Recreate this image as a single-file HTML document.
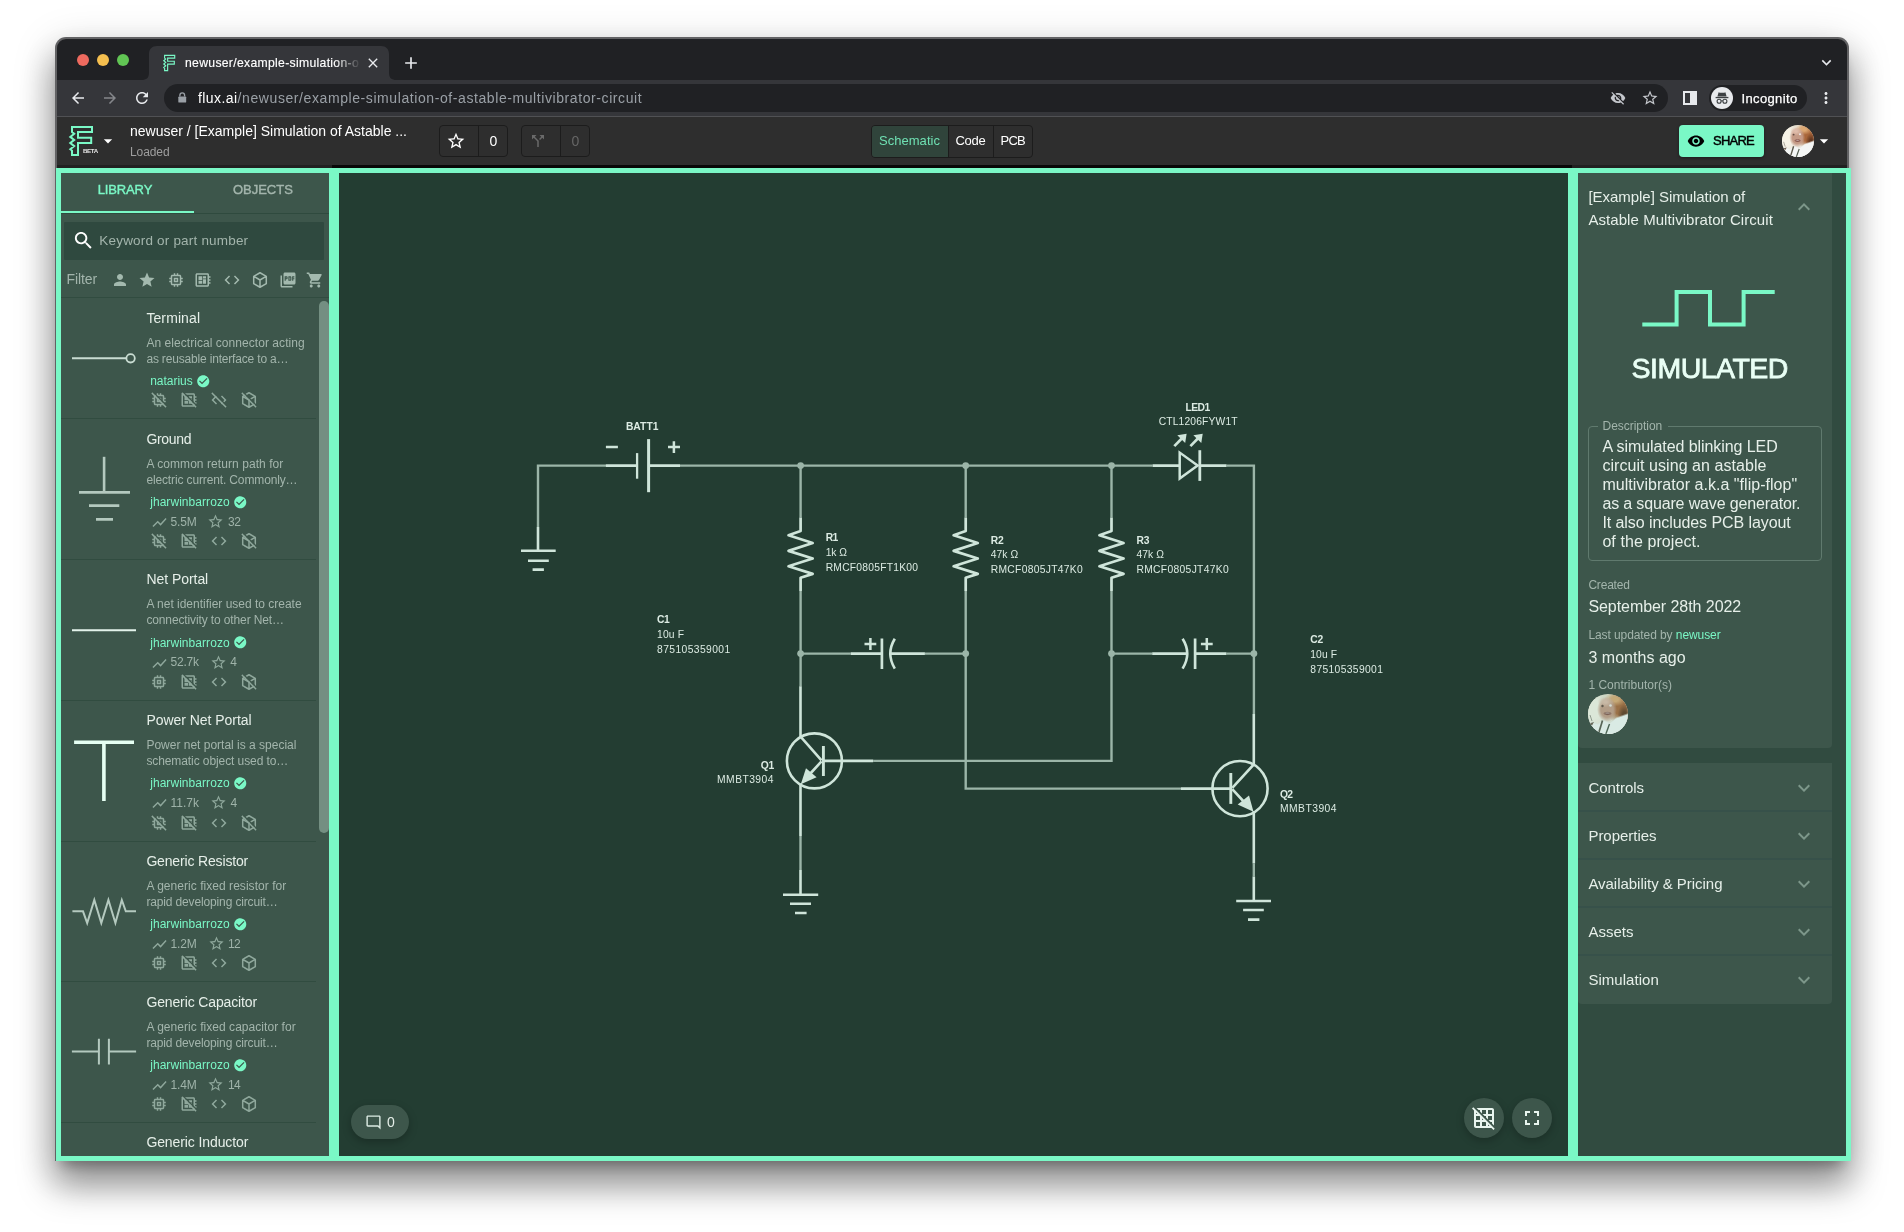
<!DOCTYPE html>
<html lang="en">
<head>
<meta charset="utf-8">
<title>newuser/example-simulation-of-astable-multivibrator-circuit</title>
<style>
*{box-sizing:border-box;margin:0;padding:0}
html,body{width:1904px;height:1232px;overflow:hidden;background:#fff}
body{position:relative;font-family:"Liberation Sans",sans-serif;color:#e6efe9;-webkit-font-smoothing:antialiased}
.a{position:absolute}
.t{position:absolute;white-space:nowrap;line-height:20px;height:20px}
svg{position:absolute;overflow:visible}
/* window */
#root{left:0;top:0;width:1904px;height:1232px;will-change:transform}
#shadow{left:56px;top:38px;width:1792px;height:1122px;border-radius:10px 10px 0 0;
  box-shadow:0 23.500px 35.400px 1.800px rgba(0,0,0,.38),0 10.100px 12.900px -6.550px rgba(0,0,0,.31),0 10px 40.800px 5px rgba(0,0,0,.15)}
#win{left:55px;top:37px;width:1794px;height:1124px;border-radius:11px 11px 0 0;background:#626264;overflow:hidden}
#tabbar{left:2px;top:2px;width:1790px;height:41px;background:#202124;border-radius:9px 9px 0 0}
#toolbar{left:2px;top:43px;width:1790px;height:36px;background:#35363a}
#tbline{left:2px;top:79px;width:1790px;height:1px;background:#505154}
#apphdr{left:2px;top:80px;width:1790px;height:48px;background:#2e2e2e}
#strip{left:2px;top:128px;width:1790px;height:3px;background:#212121}
#stripb{left:277px;top:128px;width:1240px;height:3px;background:#080808}
#below{left:2px;top:131px;width:1790px;height:993px;background:#233d32}
/* panes */
.pane{position:absolute;border:5px solid #7af8c6;top:168px;height:993px;overflow:hidden}
#lp{left:56px;width:278px;background:#3d564b}
#cv{left:334px;width:1239px;background:#233d32}
#rp{left:1573px;width:278px;background:#314b40}
</style>
</head>
<body>
<div id="root" class="a">
<div id="shadow" class="a"></div>
<div id="win" class="a">
  <div id="tabbar" class="a"></div>
  <div id="toolbar" class="a"></div>
  <div id="tbline" class="a"></div>
  <div id="apphdr" class="a"></div>
  <div id="strip" class="a"></div>
  <div id="stripb" class="a"></div>
  <div id="below" class="a"></div>
</div>

<!-- ===== Chrome browser frame ===== -->
<div class="a" style="left:77px;top:53.500px;width:12px;height:12px;border-radius:50%;background:#ee6a5f"></div>
<div class="a" style="left:97px;top:53.500px;width:12px;height:12px;border-radius:50%;background:#f5bf4f"></div>
<div class="a" style="left:117px;top:53.500px;width:12px;height:12px;border-radius:50%;background:#61c554"></div>
<!-- active tab -->
<svg style="left:141px;top:46px" width="256" height="34" viewBox="0 0 256 34"><path d="M0 34 C6 34 8 32 8 26 V8 C8 3 11 0 16 0 H240 C245 0 248 3 248 8 V26 C248 32 250 34 256 34 Z" fill="#35363a"/></svg>
<svg style="left:0;top:0" width="200" height="80"><path d="M164.61 55.34 L174.71 55.34 L174.71 58.07 L167.64 58.07 L167.64 61.23 L174.30 61.23 L174.30 64.06 L167.64 64.06 L167.64 70.66 L164.61 70.66 L164.61 68.21 L163.75 67.44 L165.72 65.75 L163.75 64.06 L165.72 62.38 L163.75 60.74 L165.72 59.05 L164.61 58.07 Z" fill="none" stroke="#7af8c6" stroke-width="1.150" stroke-linejoin="miter"/></svg>
<div class="t" style="letter-spacing:0.311px;left:185px;top:53px;font-size:12.200px;color:#fff;-webkit-text-stroke:.150px #fff;width:176px;overflow:hidden;-webkit-mask-image:linear-gradient(90deg,#000 150px,transparent 176px);mask-image:linear-gradient(90deg,#000 150px,transparent 176px)">newuser/example-simulation-o</div>
<svg style="left:365px;top:55px" width="16" height="16" viewBox="0 0 24 24"><path d="M19 6.410L17.590 5 12 10.590 6.410 5 5 6.410 10.590 12 5 17.590 6.410 19 12 13.410 17.590 19 19 17.590 13.410 12z" fill="#e8eaed"/></svg>
<svg style="left:401px;top:53px" width="20" height="20" viewBox="0 0 24 24"><path d="M19 13h-6v6h-2v-6H5v-2h6V5h2v6h6v2z" fill="#e8eaed"/></svg>
<svg style="left:1816.500px;top:53.100px" width="19" height="19" viewBox="0 0 24 24"><path d="M16.590 8.590L12 13.170 7.410 8.590 6 10l6 6 6-6z" fill="#e8eaed"/></svg>
<!-- toolbar -->
<svg style="left:69px;top:89px" width="18" height="18" viewBox="0 0 24 24"><path d="M20 11H7.830l5.590-5.590L12 4l-8 8 8 8 1.410-1.410L7.830 13H20v-2z" fill="#e8eaed"/></svg>
<svg style="left:101px;top:89px" width="18" height="18" viewBox="0 0 24 24"><path d="M12 4l-1.410 1.410L16.170 11H4v2h12.170l-5.580 5.590L12 20l8-8z" fill="#85878b"/></svg>
<svg style="left:133px;top:89px" width="18" height="18" viewBox="0 0 24 24"><path d="M17.650 6.350C16.200 4.900 14.210 4 12 4c-4.420 0-7.990 3.580-7.990 8s3.570 8 7.990 8c3.730 0 6.840-2.550 7.730-6h-2.080c-.82 2.330-3.040 4-5.650 4-3.310 0-6-2.690-6-6s2.690-6 6-6c1.660 0 3.140.69 4.220 1.780L13 11h7V4l-2.350 2.350z" fill="#e8eaed"/></svg>
<div class="a" style="left:164px;top:84px;width:1504px;height:28px;border-radius:14px;background:#202124"></div>
<svg style="left:176.800px;top:92.200px" width="10.500" height="11.400" viewBox="0 0 12 13"><path d="M3.300 5 V3.600 A2.700 2.700 0 0 1 8.700 3.600 V5" fill="none" stroke="#9aa0a6" stroke-width="1.500"/><rect x="1.500" y="5" width="9" height="7" rx="1" fill="#9aa0a6"/></svg>
<div class="t" style="left:198px;top:88px;font-size:14px"><span style="letter-spacing:0.432px;color:#fff">flux.ai</span><span style="letter-spacing:0.584px;color:#9aa0a6">/newuser/example-simulation-of-astable-multivibrator-circuit</span></div>
<svg style="left:1610px;top:90px" width="16" height="16" viewBox="0 0 24 24"><path d="M12 7c2.760 0 5 2.240 5 5 0 .65-.13 1.260-.36 1.830l2.920 2.920c1.510-1.260 2.700-2.890 3.430-4.750-1.730-4.390-6-7.500-11-7.500-1.400 0-2.740.25-3.980.7l2.160 2.160C10.740 7.130 11.350 7 12 7zM2 4.270l2.280 2.280.46.460C3.080 8.300 1.780 10.020 1 12c1.730 4.390 6 7.500 11 7.500 1.550 0 3.030-.3 4.380-.84l.42.42L19.730 22 21 20.730 3.270 3 2 4.270zM7.530 9.800l1.550 1.550c-.05.21-.08.43-.08.65 0 1.660 1.340 3 3 3 .22 0 .44-.03.65-.08l1.550 1.550c-.67.330-1.410.53-2.200.53-2.760 0-5-2.240-5-5 0-.79.2-1.530.53-2.200zm4.310-.78l3.150 3.150.02-.16c0-1.660-1.340-3-3-3l-.17.010z" fill="#c4c7cc"/></svg>
<svg style="left:1641px;top:89px" width="18" height="18" viewBox="0 0 24 24"><path d="M22 9.240l-7.190-.62L12 2 9.190 8.630 2 9.240l5.460 4.730L5.820 21 12 17.270 18.180 21l-1.630-7.030L22 9.240zM12 15.400l-3.760 2.270 1-4.280-3.320-2.880 4.380-.38L12 6.100l1.710 4.040 4.380.38-3.320 2.880 1 4.280L12 15.400z" fill="#c4c7cc"/></svg>
<svg style="left:1683px;top:91px" width="14" height="14" viewBox="0 0 14 14"><rect x="1" y="1" width="12" height="12" fill="none" stroke="#e8eaed" stroke-width="2"/><rect x="7" y="1" width="6" height="12" fill="#e8eaed"/></svg>
<div class="a" style="left:1709px;top:85px;width:98px;height:26px;border-radius:13px;background:#202124"></div>
<div class="a" style="left:1711px;top:87px;width:22px;height:22px;border-radius:50%;background:#e8eaed"></div>
<svg style="left:1714px;top:90px" width="16" height="16" viewBox="0 0 16 16"><path d="M4.600 2.200 L5.800 2.800 H10.200 L11.400 2.200 L12.600 6.400 H3.400 Z" fill="#3c4043"/><rect x="1.600" y="6.900" width="12.800" height="1.300" fill="#3c4043"/><circle cx="5.100" cy="11.300" r="2" fill="none" stroke="#3c4043" stroke-width="1.100"/><circle cx="10.900" cy="11.300" r="2" fill="none" stroke="#3c4043" stroke-width="1.100"/><path d="M7.100 11 Q8 10.400 8.900 11" fill="none" stroke="#3c4043" stroke-width="1"/></svg>
<div class="t" style="letter-spacing:0.359px;left:1741.500px;top:88.500px;font-size:13px;color:#fff;-webkit-text-stroke:.250px #fff">Incognito</div>
<svg style="left:1817px;top:89px" width="18" height="18" viewBox="0 0 24 24"><path d="M12 8c1.100 0 2-.9 2-2s-.9-2-2-2-2 .9-2 2 .9 2 2 2zm0 2c-1.100 0-2 .9-2 2s.9 2 2 2 2-.9 2-2-.9-2-2-2zm0 6c-1.100 0-2 .9-2 2s.9 2 2 2 2-.9 2-2-.9-2-2-2z" fill="#e8eaed"/></svg>


<!-- ===== Flux app header ===== -->
<svg style="left:0;top:0" width="200" height="170"><path d="M72.0 127.0 L92.0 127.0 L92.0 132.0 L78.0 132.0 L78.0 137.8 L91.2 137.8 L91.2 143.0 L78.0 143.0 L78.0 155.1 L72.0 155.1 L72.0 150.6 L70.3 149.2 L74.2 146.1 L70.3 143.0 L74.2 139.9 L70.3 136.9 L74.2 133.8 L72.0 132.0 Z" fill="none" stroke="#7af8c6" stroke-width="2" stroke-linejoin="miter"/></svg>
<div class="t" style="letter-spacing:-0.398px;left:83px;top:143.700px;font-size:6.200px;font-weight:bold;color:#e4e4e4;line-height:14px;height:14px">BETA</div>
<svg style="left:98px;top:130.700px" width="20" height="20" viewBox="0 0 24 24"><path d="M7 10l5 5 5-5z" fill="#fff"/></svg>
<div class="t" style="letter-spacing:-0.001px;left:130px;top:121px;font-size:14px;color:#fff">newuser / [Example] Simulation of Astable ...</div>
<div class="t" style="letter-spacing:-0.091px;left:130px;top:141.500px;font-size:12px;color:#9e9e9e">Loaded</div>
<!-- star group -->
<div class="a" style="left:439px;top:125px;width:69px;height:32px;border:1px solid #1c1c1c;border-radius:4px"></div>
<div class="a" style="left:478px;top:126px;width:1px;height:30px;background:#1c1c1c"></div>
<svg style="left:446px;top:131px" width="20" height="20" viewBox="0 0 24 24"><path d="M22 9.240l-7.190-.62L12 2 9.190 8.630 2 9.240l5.460 4.730L5.820 21 12 17.270 18.180 21l-1.630-7.030L22 9.240zM12 15.400l-3.760 2.270 1-4.280-3.320-2.880 4.380-.38L12 6.100l1.710 4.040 4.380.38-3.320 2.880 1 4.280L12 15.400z" fill="#fff"/></svg>
<div class="t" style="left:479px;top:131px;width:29px;text-align:center;font-size:14px;color:#fff">0</div>
<!-- fork group -->
<div class="a" style="left:521px;top:125px;width:69px;height:32px;border:1px solid #1c1c1c;border-radius:4px"></div>
<div class="a" style="left:560px;top:126px;width:1px;height:30px;background:#1c1c1c"></div>
<svg style="left:529px;top:132px" width="18" height="18" viewBox="0 0 24 24"><path d="M14 4l2.290 2.290-2.880 2.880 1.420 1.420 2.880-2.880L20 10V4zm-4 0H4v6l2.290-2.290 4.710 4.700V20h2v-8.410l-5.290-5.300z" fill="#6a6a6a"/></svg>
<div class="t" style="left:561px;top:131px;width:29px;text-align:center;font-size:14px;color:#666">0</div>
<!-- view switch -->
<div class="a" style="left:871px;top:125px;width:162px;height:33px;border:1px solid #1c1c1c;border-radius:4px;background:#2e2e2e"></div>
<div class="a" style="left:872px;top:126px;width:76px;height:31px;border-radius:3px 0 0 3px;background:#30443b"></div>
<div class="a" style="left:948px;top:126px;width:1px;height:31px;background:#1c1c1c"></div>
<div class="a" style="left:993px;top:126px;width:1px;height:31px;background:#1c1c1c"></div>
<div class="t" style="letter-spacing:0.033px;left:879px;top:131px;font-size:13px;color:#6fe0b3">Schematic</div>
<div class="t" style="letter-spacing:-0.270px;left:955.500px;top:131px;font-size:13px;color:#fff">Code</div>
<div class="t" style="letter-spacing:-0.745px;left:1000.500px;top:131px;font-size:13px;color:#fff">PCB</div>
<!-- share -->
<div class="a" style="left:1678.600px;top:125px;width:85.600px;height:32px;border-radius:4px;background:#7af8c6;box-shadow:0 1px 3px rgba(0,0,0,.4)"></div>
<svg style="left:1687px;top:132px" width="18" height="18" viewBox="0 0 24 24"><path d="M12 4.500C7 4.500 2.730 7.610 1 12c1.730 4.390 6 7.500 11 7.500s9.270-3.110 11-7.500c-1.730-4.390-6-7.500-11-7.500zM12 17c-2.760 0-5-2.240-5-5s2.240-5 5-5 5 2.240 5 5-2.240 5-5 5zm0-8c-1.660 0-3 1.340-3 3s1.340 3 3 3 3-1.340 3-3-1.340-3-3-3z" fill="#000"/></svg>
<div class="t" style="letter-spacing:-0.759px;left:1713px;top:131px;font-size:13px;-webkit-text-stroke:.450px #000;color:#000">SHARE</div>
<!-- avatar -->
<svg style="left:1781.6px;top:125px" width="32" height="32" viewBox="0 0 40 40"><defs><clipPath id="av1c"><circle cx="20" cy="20" r="20"/></clipPath><radialGradient id="av1g1"><stop offset="0.5" stop-color="#f6f2e6"/><stop offset="1.0" stop-color="#f6f2e6" stop-opacity="0"/></radialGradient><radialGradient id="av1g2"><stop offset="0.45" stop-color="#a9663a"/><stop offset="1.0" stop-color="#a9663a" stop-opacity="0"/></radialGradient><radialGradient id="av1g3"><stop offset="0.3" stop-color="#643820"/><stop offset="1.0" stop-color="#643820" stop-opacity="0"/></radialGradient><radialGradient id="av1g4"><stop offset="0.3" stop-color="#dca873"/><stop offset="1.0" stop-color="#dca873" stop-opacity="0"/></radialGradient><radialGradient id="av1g5"><stop offset="0.62" stop-color="#c59a86"/><stop offset="1.0" stop-color="#c59a86" stop-opacity="0"/></radialGradient><radialGradient id="av1g6"><stop offset="0.2" stop-color="#dfbcab"/><stop offset="1.0" stop-color="#dfbcab" stop-opacity="0"/></radialGradient><radialGradient id="av1g7"><stop offset="0.4" stop-color="#7d4a44"/><stop offset="1.0" stop-color="#7d4a44" stop-opacity="0"/></radialGradient><linearGradient id="av1l" x1="0" y1="0" x2="0" y2="1"><stop offset="0" stop-color="#e4dccb"/><stop offset="1" stop-color="#efeee8"/></linearGradient></defs><g clip-path="url(#av1c)"><rect x="-4" y="-4" width="48" height="48" fill="url(#av1l)"/><ellipse cx="6" cy="15" rx="13" ry="19" fill="url(#av1g1)"/><ellipse cx="32" cy="13" rx="14" ry="17" fill="url(#av1g2)"/><ellipse cx="36.500" cy="21" rx="7" ry="11" fill="url(#av1g3)"/><ellipse cx="27" cy="5.500" rx="11" ry="7" fill="url(#av1g4)"/><ellipse cx="19" cy="15.500" rx="10" ry="12.500" fill="url(#av1g5)"/><ellipse cx="17.500" cy="8" rx="8" ry="5.500" fill="url(#av1g6)"/><ellipse cx="19.500" cy="19.500" rx="4.600" ry="2.200" fill="url(#av1g7)"/><ellipse cx="19.500" cy="19" rx="2.400" ry=".600" fill="#e9d9d2" opacity=".8"/><circle cx="14.500" cy="12" r="1.200" fill="#4a342e" opacity=".8"/><circle cx="22.500" cy="11.500" r="1.300" fill="#f3f3f3" opacity=".85"/><path d="M-2 42 L-2 30.500 L4 27.500 L10 29.500 L15 25.500 L22 28.500 L28 23.500 L42 18.500 L42 42 Z" fill="#e9ebe8" opacity=".55"/><path d="M-2 42 L-2 31.500 L4 28.500 L10 30.500 L15 26.500 L22 29.500 L28 24.500 L42 19.500 L42 42 Z" fill="#f4f6f5"/><path d="M1 29.500 L6 28 L4 31.500 Z" fill="#4a3626" opacity=".8"/><path d="M14.500 26.500 L11 38" stroke="#3d3a2b" stroke-width="1.700" stroke-opacity=".85" fill="none"/><path d="M21.500 30 L17.500 41" stroke="#2f3b2c" stroke-width="1.400" stroke-opacity=".85" fill="none"/><path d="M2 21 L4 27" stroke="#55504a" stroke-width=".800" stroke-opacity=".7" fill="none"/></g></svg>
<svg style="left:1814px;top:130.900px" width="20" height="20" viewBox="0 0 24 24"><path d="M7 10l5 5 5-5z" fill="#fff"/></svg>


<div id="lp" class="pane">
<!--LEFT-->
<div class="a" style="left:0;top:40px;width:268px;height:1px;background:#2f4a3e"></div>
<div class="a" style="left:0;top:38px;width:133px;height:2px;background:#7af8c6"></div>
<div class="t" style="letter-spacing:-0.129px;left:36.7px;top:6.9px;font-size:13px;color:#7af8c6;-webkit-text-stroke:.400px #7af8c6">LIBRARY</div>
<div class="t" style="letter-spacing:-0.024px;left:172.0px;top:6.9px;font-size:13px;color:#a3b5ac;-webkit-text-stroke:.400px #a3b5ac">OBJECTS</div>
<div class="a" style="left:3px;top:49px;width:260px;height:38px;border-radius:1px;background:#2f493f"></div>
<svg style="left:10.7px;top:56.3px" width="23" height="23" viewBox="0 0 24 24"><path d="M15.500 14h-.790l-.280-.270C15.410 12.590 16 11.110 16 9.500 16 5.910 13.090 3 9.500 3S3 5.910 3 9.500 5.910 16 9.500 16c1.610 0 3.090-.590 4.230-1.570l.270.280v.790l5 4.990L20.490 19l-4.990-5zm-6 0C7.010 14 5 11.990 5 9.500S7.010 5 9.500 5 14 7.010 14 9.500 11.990 14 9.500 14z" fill="#fff"/></svg>
<div class="t" style="letter-spacing:0.190px;left:38.3px;top:57.5px;font-size:13.5px;color:#a3b5ac;">Keyword or part number</div>
<div class="t" style="letter-spacing:-0.054px;left:5.4px;top:96.4px;font-size:14px;color:#a3b5ac;">Filter</div>
<svg style="left:49.5px;top:98.0px" width="18" height="18" viewBox="0 0 24 24"><path d="M12 12c2.210 0 4-1.790 4-4s-1.790-4-4-4-4 1.790-4 4 1.790 4 4 4zm0 2c-2.670 0-8 1.340-8 4v2h16v-2c0-2.660-5.330-4-8-4z" fill="#a3b9ae"/></svg>
<svg style="left:77.4px;top:98.0px" width="18" height="18" viewBox="0 0 24 24"><path d="M12 17.270L18.180 21l-1.640-7.030L22 9.240l-7.190-.610L12 2 9.190 8.630 2 9.240l5.460 4.730L5.820 21z" fill="#a3b9ae"/></svg>
<svg style="left:105.6px;top:98.0px" width="18" height="18" viewBox="0 0 24 24"><path d="M15 9H9v6h6V9zm-2 4h-2v-2h2v2zm8-2V9h-2V7c0-1.100-.9-2-2-2h-2V3h-2v2h-2V3H9v2H7c-1.100 0-2 .9-2 2v2H3v2h2v2H3v2h2v2c0 1.100.9 2 2 2h2v2h2v-2h2v2h2v-2h2c1.100 0 2-.9 2-2v-2h2v-2h-2v-2h2zm-4 6H7V7h10v10z" fill="#a3b9ae"/></svg>
<svg style="left:133.4px;top:98.0px" width="18" height="18" viewBox="0 0 24 24"><path d="M22 9V7h-2V5c0-1.100-.9-2-2-2H4c-1.100 0-2 .9-2 2v14c0 1.100.9 2 2 2h14c1.100 0 2-.9 2-2v-2h2v-2h-2v-2h2v-2h-2V9h2zm-4 10H4V5h14v14zM6 13h5v4H6zm6-6h4v3h-4zM6 7h5v5H6zm6 4h4v6h-4z" fill="#a3b9ae"/></svg>
<svg style="left:161.6px;top:98.0px" width="18" height="18" viewBox="0 0 24 24"><path d="M9.400 16.600L4.800 12l4.600-4.600L8 6l-6 6 6 6 1.400-1.400zm5.200 0l4.600-4.600-4.600-4.600L16 6l6 6-6 6-1.400-1.400z" fill="#a3b9ae"/></svg>
<svg style="left:189.6px;top:98.0px" width="18" height="18" viewBox="0 0 24 24"><path d="M12 2.300 L20.400 7.100 V16.900 L12 21.700 L3.600 16.900 V7.100 Z M3.900 7.300 L12 12 L20.100 7.300 M12 12 V21.400" fill="none" stroke="#a3b9ae" stroke-width="2" stroke-linejoin="round"/></svg>
<svg style="left:217.6px;top:98.0px" width="18" height="18" viewBox="0 0 24 24"><path d="M20 2H8c-1.100 0-2 .9-2 2v12c0 1.100.9 2 2 2h12c1.100 0 2-.9 2-2V4c0-1.100-.9-2-2-2zm-8.500 7.500c0 .830-.670 1.500-1.500 1.500H9v2H7.500V7H10c.830 0 1.500.670 1.500 1.500v1zm5 2c0 .830-.670 1.500-1.500 1.500h-2.500V7H15c.830 0 1.500.670 1.500 1.500v3zm4-3H19v1h1.500V11H19v2h-1.500V7h3v1.500zM9 9.500h1v-1H9v1zM4 6H2v14c0 1.100.9 2 2 2h14v-2H4V6zm10 5.500h1v-3h-1v3z" fill="#a3b9ae"/></svg>
<svg style="left:244.9px;top:98.0px" width="18" height="18" viewBox="0 0 24 24"><path d="M7 18c-1.100 0-1.990.9-1.990 2S5.900 22 7 22s2-.9 2-2-.9-2-2-2zM1 2v2h2l3.600 7.590-1.350 2.450c-.160.280-.250.610-.250.960 0 1.100.9 2 2 2h12v-2H7.420c-.140 0-.250-.110-.250-.250l.030-.120.9-1.630h7.450c.750 0 1.410-.410 1.750-1.030l3.580-6.490c.080-.140.120-.310.120-.480 0-.550-.450-1-1-1H5.210l-.940-2H1zm16 16c-1.100 0-1.990.9-1.990 2s.890 2 1.990 2 2-.9 2-2-.9-2-2-2z" fill="#a3b9ae"/></svg>
<div class="a" style="left:0;top:124.250px;width:268px;height:1px;background:#314c40"></div>
<div class="a" style="left:257.800px;top:127.800px;width:9.800px;height:532.400px;border-radius:4.900px;background:#748f82"></div>
<!-- Terminal -->
<div class="t" style="letter-spacing:0.099px;left:85.4px;top:134.5px;font-size:14px;color:#e6efe9;">Terminal</div>
<div class="t" style="letter-spacing:0.052px;left:85.4px;top:159.6px;font-size:12px;color:#a3b5ac;">An electrical connector acting</div>
<div class="t" style="letter-spacing:-0.176px;left:85.4px;top:175.6px;font-size:12px;color:#a3b5ac;">as reusable interface to a…</div>
<div class="t" style="letter-spacing:-0.025px;left:89.2px;top:197.9px;font-size:12px;color:#7af8c6;">natarius</div>
<svg style="left:135.2px;top:200.6px" width="14.5" height="14.5" viewBox="0 0 24 24"><path d="M12 2C6.480 2 2 6.480 2 12s4.480 10 10 10 10-4.480 10-10S17.520 2 12 2zm-2 15l-5-5 1.410-1.410L10 14.170l7.590-7.590L19 8l-9 9z" fill="#7af8c6"/></svg>
<svg style="left:89.0px;top:218.3px" width="18" height="18" viewBox="0 0 24 24"><path d="M15 9H9v6h6V9zm-2 4h-2v-2h2v2zm8-2V9h-2V7c0-1.100-.9-2-2-2h-2V3h-2v2h-2V3H9v2H7c-1.100 0-2 .9-2 2v2H3v2h2v2H3v2h2v2c0 1.100.9 2 2 2h2v2h2v-2h2v2h2v-2h2c1.100 0 2-.9 2-2v-2h2v-2h-2v-2h2zm-4 6H7V7h10v10z" fill="#8fa89c"/><path d="M2.500 2.500 L21.500 21.500" stroke="#8fa89c" stroke-width="2" fill="none"/><path d="M4 1.200 L22.800 20" stroke="#3d564b" stroke-width="1.600" fill="none"/></svg>
<svg style="left:118.8px;top:218.3px" width="18" height="18" viewBox="0 0 24 24"><path d="M22 9V7h-2V5c0-1.100-.9-2-2-2H4c-1.100 0-2 .9-2 2v14c0 1.100.9 2 2 2h14c1.100 0 2-.9 2-2v-2h2v-2h-2v-2h2v-2h-2V9h2zm-4 10H4V5h14v14zM6 13h5v4H6zm6-6h4v3h-4zM6 7h5v5H6zm6 4h4v6h-4z" fill="#8fa89c"/><path d="M2.500 2.500 L21.500 21.500" stroke="#8fa89c" stroke-width="2" fill="none"/><path d="M4 1.200 L22.800 20" stroke="#3d564b" stroke-width="1.600" fill="none"/></svg>
<svg style="left:148.8px;top:218.3px" width="18" height="18" viewBox="0 0 24 24"><path d="M9.400 16.600L4.800 12l4.600-4.600L8 6l-6 6 6 6 1.400-1.400zm5.200 0l4.600-4.600-4.600-4.600L16 6l6 6-6 6-1.400-1.400z" fill="#8fa89c"/><path d="M2.500 2.500 L21.500 21.500" stroke="#8fa89c" stroke-width="2" fill="none"/><path d="M4 1.200 L22.800 20" stroke="#3d564b" stroke-width="1.600" fill="none"/></svg>
<svg style="left:179.1px;top:218.3px" width="18" height="18" viewBox="0 0 24 24"><path d="M12 2.300 L20.400 7.100 V16.900 L12 21.700 L3.600 16.900 V7.100 Z M3.900 7.300 L12 12 L20.100 7.300 M12 12 V21.400" fill="none" stroke="#8fa89c" stroke-width="2" stroke-linejoin="round"/><path d="M2.500 2.500 L21.500 21.500" stroke="#8fa89c" stroke-width="2" fill="none"/><path d="M4 1.200 L22.800 20" stroke="#3d564b" stroke-width="1.600" fill="none"/></svg>
<div class="a" style="left:0;top:245.25px;width:255px;height:1px;background:#314c40"></div>
<!-- Ground -->
<div class="t" style="letter-spacing:-0.317px;left:85.4px;top:255.5px;font-size:14px;color:#e6efe9;">Ground</div>
<div class="t" style="letter-spacing:0.066px;left:85.4px;top:280.6px;font-size:12px;color:#a3b5ac;">A common return path for</div>
<div class="t" style="letter-spacing:-0.134px;left:85.4px;top:296.6px;font-size:12px;color:#a3b5ac;">electric current. Commonly…</div>
<div class="t" style="letter-spacing:0.057px;left:89.2px;top:318.9px;font-size:12px;color:#7af8c6;">jharwinbarrozo</div>
<svg style="left:172.2px;top:321.6px" width="14.5" height="14.5" viewBox="0 0 24 24"><path d="M12 2C6.480 2 2 6.480 2 12s4.480 10 10 10 10-4.480 10-10S17.520 2 12 2zm-2 15l-5-5 1.410-1.410L10 14.170l7.590-7.590L19 8l-9 9z" fill="#7af8c6"/></svg>
<svg style="left:89.5px;top:340.7px" width="17" height="17" viewBox="0 0 24 24"><path d="M3.500 18.490l6-6.010 4 4L22 6.920l-1.410-1.410-7.090 7.970-4-4L2 16.990z" fill="#8fa89c"/></svg>
<div class="t" style="letter-spacing:-0.147px;left:109.5px;top:338.6px;font-size:12px;color:#9fb3a9;">5.5M</div>
<svg style="left:146.4px;top:339.7px" width="17" height="17" viewBox="0 0 24 24"><path d="M22 9.240l-7.190-.620L12 2 9.190 8.630 2 9.240l5.460 4.730L5.820 21 12 17.270 18.180 21l-1.630-7.030L22 9.240zM12 15.400l-3.760 2.270 1-4.280-3.320-2.880 4.380-.380L12 6.100l1.710 4.040 4.380.380-3.320 2.880 1 4.280L12 15.400z" fill="#8fa89c"/></svg>
<div class="t" style="letter-spacing:-0.430px;left:167.0px;top:338.6px;font-size:12px;color:#9fb3a9;">32</div>
<svg style="left:89.0px;top:359.0px" width="18" height="18" viewBox="0 0 24 24"><path d="M15 9H9v6h6V9zm-2 4h-2v-2h2v2zm8-2V9h-2V7c0-1.100-.9-2-2-2h-2V3h-2v2h-2V3H9v2H7c-1.100 0-2 .9-2 2v2H3v2h2v2H3v2h2v2c0 1.100.9 2 2 2h2v2h2v-2h2v2h2v-2h2c1.100 0 2-.9 2-2v-2h2v-2h-2v-2h2zm-4 6H7V7h10v10z" fill="#8fa89c"/><path d="M2.500 2.500 L21.500 21.500" stroke="#8fa89c" stroke-width="2" fill="none"/><path d="M4 1.200 L22.800 20" stroke="#3d564b" stroke-width="1.600" fill="none"/></svg>
<svg style="left:118.8px;top:359.0px" width="18" height="18" viewBox="0 0 24 24"><path d="M22 9V7h-2V5c0-1.100-.9-2-2-2H4c-1.100 0-2 .9-2 2v14c0 1.100.9 2 2 2h14c1.100 0 2-.9 2-2v-2h2v-2h-2v-2h2v-2h-2V9h2zm-4 10H4V5h14v14zM6 13h5v4H6zm6-6h4v3h-4zM6 7h5v5H6zm6 4h4v6h-4z" fill="#8fa89c"/><path d="M2.500 2.500 L21.500 21.500" stroke="#8fa89c" stroke-width="2" fill="none"/><path d="M4 1.200 L22.800 20" stroke="#3d564b" stroke-width="1.600" fill="none"/></svg>
<svg style="left:148.8px;top:359.0px" width="18" height="18" viewBox="0 0 24 24"><path d="M9.400 16.600L4.800 12l4.600-4.600L8 6l-6 6 6 6 1.400-1.400zm5.200 0l4.600-4.600-4.600-4.600L16 6l6 6-6 6-1.400-1.400z" fill="#8fa89c"/></svg>
<svg style="left:179.1px;top:359.0px" width="18" height="18" viewBox="0 0 24 24"><path d="M12 2.300 L20.400 7.100 V16.900 L12 21.700 L3.600 16.900 V7.100 Z M3.900 7.300 L12 12 L20.100 7.300 M12 12 V21.400" fill="none" stroke="#8fa89c" stroke-width="2" stroke-linejoin="round"/><path d="M2.500 2.500 L21.500 21.500" stroke="#8fa89c" stroke-width="2" fill="none"/><path d="M4 1.200 L22.800 20" stroke="#3d564b" stroke-width="1.600" fill="none"/></svg>
<div class="a" style="left:0;top:386.00px;width:255px;height:1px;background:#314c40"></div>
<!-- Net Portal -->
<div class="t" style="letter-spacing:-0.045px;left:85.4px;top:396.2px;font-size:14px;color:#e6efe9;">Net Portal</div>
<div class="t" style="letter-spacing:-0.008px;left:85.4px;top:421.4px;font-size:12px;color:#a3b5ac;">A net identifier used to create</div>
<div class="t" style="letter-spacing:-0.124px;left:85.4px;top:437.4px;font-size:12px;color:#a3b5ac;">connectivity to other Net…</div>
<div class="t" style="letter-spacing:0.057px;left:89.2px;top:459.6px;font-size:12px;color:#7af8c6;">jharwinbarrozo</div>
<svg style="left:172.2px;top:462.4px" width="14.5" height="14.5" viewBox="0 0 24 24"><path d="M12 2C6.480 2 2 6.480 2 12s4.480 10 10 10 10-4.480 10-10S17.520 2 12 2zm-2 15l-5-5 1.410-1.410L10 14.170l7.590-7.590L19 8l-9 9z" fill="#7af8c6"/></svg>
<svg style="left:89.5px;top:481.5px" width="17" height="17" viewBox="0 0 24 24"><path d="M3.500 18.490l6-6.010 4 4L22 6.920l-1.410-1.410-7.090 7.970-4-4L2 16.990z" fill="#8fa89c"/></svg>
<div class="t" style="letter-spacing:-0.192px;left:109.5px;top:479.4px;font-size:12px;color:#9fb3a9;">52.7k</div>
<svg style="left:148.7px;top:480.5px" width="17" height="17" viewBox="0 0 24 24"><path d="M22 9.240l-7.190-.620L12 2 9.190 8.630 2 9.240l5.460 4.730L5.820 21 12 17.270 18.180 21l-1.630-7.030L22 9.240zM12 15.400l-3.760 2.270 1-4.280-3.320-2.880 4.380-.380L12 6.100l1.710 4.040 4.380.380-3.320 2.880 1 4.280L12 15.400z" fill="#8fa89c"/></svg>
<div class="t" style="letter-spacing:-0.688px;left:169.3px;top:479.4px;font-size:12px;color:#9fb3a9;">4</div>
<svg style="left:89.0px;top:499.8px" width="18" height="18" viewBox="0 0 24 24"><path d="M15 9H9v6h6V9zm-2 4h-2v-2h2v2zm8-2V9h-2V7c0-1.100-.9-2-2-2h-2V3h-2v2h-2V3H9v2H7c-1.100 0-2 .9-2 2v2H3v2h2v2H3v2h2v2c0 1.100.9 2 2 2h2v2h2v-2h2v2h2v-2h2c1.100 0 2-.9 2-2v-2h2v-2h-2v-2h2zm-4 6H7V7h10v10z" fill="#8fa89c"/></svg>
<svg style="left:118.8px;top:499.8px" width="18" height="18" viewBox="0 0 24 24"><path d="M22 9V7h-2V5c0-1.100-.9-2-2-2H4c-1.100 0-2 .9-2 2v14c0 1.100.9 2 2 2h14c1.100 0 2-.9 2-2v-2h2v-2h-2v-2h2v-2h-2V9h2zm-4 10H4V5h14v14zM6 13h5v4H6zm6-6h4v3h-4zM6 7h5v5H6zm6 4h4v6h-4z" fill="#8fa89c"/><path d="M2.500 2.500 L21.500 21.500" stroke="#8fa89c" stroke-width="2" fill="none"/><path d="M4 1.200 L22.800 20" stroke="#3d564b" stroke-width="1.600" fill="none"/></svg>
<svg style="left:148.8px;top:499.8px" width="18" height="18" viewBox="0 0 24 24"><path d="M9.400 16.600L4.800 12l4.600-4.600L8 6l-6 6 6 6 1.400-1.400zm5.200 0l4.600-4.600-4.600-4.600L16 6l6 6-6 6-1.400-1.400z" fill="#8fa89c"/></svg>
<svg style="left:179.1px;top:499.8px" width="18" height="18" viewBox="0 0 24 24"><path d="M12 2.300 L20.400 7.100 V16.900 L12 21.700 L3.600 16.900 V7.100 Z M3.900 7.300 L12 12 L20.100 7.300 M12 12 V21.400" fill="none" stroke="#8fa89c" stroke-width="2" stroke-linejoin="round"/><path d="M2.500 2.500 L21.500 21.500" stroke="#8fa89c" stroke-width="2" fill="none"/><path d="M4 1.200 L22.800 20" stroke="#3d564b" stroke-width="1.600" fill="none"/></svg>
<div class="a" style="left:0;top:526.75px;width:255px;height:1px;background:#314c40"></div>
<!-- Power Net Portal -->
<div class="t" style="letter-spacing:-0.033px;left:85.4px;top:537.0px;font-size:14px;color:#e6efe9;">Power Net Portal</div>
<div class="t" style="letter-spacing:-0.003px;left:85.4px;top:562.1px;font-size:12px;color:#a3b5ac;">Power net portal is a special</div>
<div class="t" style="letter-spacing:-0.091px;left:85.4px;top:578.1px;font-size:12px;color:#a3b5ac;">schematic object used to…</div>
<div class="t" style="letter-spacing:0.057px;left:89.2px;top:600.4px;font-size:12px;color:#7af8c6;">jharwinbarrozo</div>
<svg style="left:172.2px;top:603.1px" width="14.5" height="14.5" viewBox="0 0 24 24"><path d="M12 2C6.480 2 2 6.480 2 12s4.480 10 10 10 10-4.480 10-10S17.520 2 12 2zm-2 15l-5-5 1.410-1.410L10 14.170l7.590-7.590L19 8l-9 9z" fill="#7af8c6"/></svg>
<svg style="left:89.5px;top:622.2px" width="17" height="17" viewBox="0 0 24 24"><path d="M3.500 18.490l6-6.010 4 4L22 6.920l-1.410-1.410-7.090 7.970-4-4L2 16.990z" fill="#8fa89c"/></svg>
<div class="t" style="letter-spacing:0.006px;left:109.5px;top:620.1px;font-size:12px;color:#9fb3a9;">11.7k</div>
<svg style="left:148.8px;top:621.2px" width="17" height="17" viewBox="0 0 24 24"><path d="M22 9.240l-7.190-.620L12 2 9.190 8.630 2 9.240l5.460 4.730L5.820 21 12 17.270 18.180 21l-1.630-7.030L22 9.240zM12 15.400l-3.760 2.270 1-4.280-3.320-2.880 4.380-.380L12 6.100l1.710 4.040 4.380.380-3.320 2.880 1 4.280L12 15.400z" fill="#8fa89c"/></svg>
<div class="t" style="letter-spacing:-0.688px;left:169.4px;top:620.1px;font-size:12px;color:#9fb3a9;">4</div>
<svg style="left:89.0px;top:640.5px" width="18" height="18" viewBox="0 0 24 24"><path d="M15 9H9v6h6V9zm-2 4h-2v-2h2v2zm8-2V9h-2V7c0-1.100-.9-2-2-2h-2V3h-2v2h-2V3H9v2H7c-1.100 0-2 .9-2 2v2H3v2h2v2H3v2h2v2c0 1.100.9 2 2 2h2v2h2v-2h2v2h2v-2h2c1.100 0 2-.9 2-2v-2h2v-2h-2v-2h2zm-4 6H7V7h10v10z" fill="#8fa89c"/><path d="M2.500 2.500 L21.500 21.500" stroke="#8fa89c" stroke-width="2" fill="none"/><path d="M4 1.200 L22.800 20" stroke="#3d564b" stroke-width="1.600" fill="none"/></svg>
<svg style="left:118.8px;top:640.5px" width="18" height="18" viewBox="0 0 24 24"><path d="M22 9V7h-2V5c0-1.100-.9-2-2-2H4c-1.100 0-2 .9-2 2v14c0 1.100.9 2 2 2h14c1.100 0 2-.9 2-2v-2h2v-2h-2v-2h2v-2h-2V9h2zm-4 10H4V5h14v14zM6 13h5v4H6zm6-6h4v3h-4zM6 7h5v5H6zm6 4h4v6h-4z" fill="#8fa89c"/><path d="M2.500 2.500 L21.500 21.500" stroke="#8fa89c" stroke-width="2" fill="none"/><path d="M4 1.200 L22.800 20" stroke="#3d564b" stroke-width="1.600" fill="none"/></svg>
<svg style="left:148.8px;top:640.5px" width="18" height="18" viewBox="0 0 24 24"><path d="M9.400 16.600L4.800 12l4.600-4.600L8 6l-6 6 6 6 1.400-1.400zm5.200 0l4.600-4.600-4.600-4.600L16 6l6 6-6 6-1.400-1.400z" fill="#8fa89c"/></svg>
<svg style="left:179.1px;top:640.5px" width="18" height="18" viewBox="0 0 24 24"><path d="M12 2.300 L20.400 7.100 V16.900 L12 21.700 L3.600 16.900 V7.100 Z M3.900 7.300 L12 12 L20.100 7.300 M12 12 V21.400" fill="none" stroke="#8fa89c" stroke-width="2" stroke-linejoin="round"/><path d="M2.500 2.500 L21.500 21.500" stroke="#8fa89c" stroke-width="2" fill="none"/><path d="M4 1.200 L22.800 20" stroke="#3d564b" stroke-width="1.600" fill="none"/></svg>
<div class="a" style="left:0;top:667.50px;width:255px;height:1px;background:#314c40"></div>
<!-- Generic Resistor -->
<div class="t" style="letter-spacing:-0.160px;left:85.4px;top:677.8px;font-size:14px;color:#e6efe9;">Generic Resistor</div>
<div class="t" style="letter-spacing:0.042px;left:85.4px;top:702.9px;font-size:12px;color:#a3b5ac;">A generic fixed resistor for</div>
<div class="t" style="letter-spacing:-0.142px;left:85.4px;top:718.9px;font-size:12px;color:#a3b5ac;">rapid developing circuit…</div>
<div class="t" style="letter-spacing:0.057px;left:89.2px;top:741.1px;font-size:12px;color:#7af8c6;">jharwinbarrozo</div>
<svg style="left:172.2px;top:743.9px" width="14.5" height="14.5" viewBox="0 0 24 24"><path d="M12 2C6.480 2 2 6.480 2 12s4.480 10 10 10 10-4.480 10-10S17.520 2 12 2zm-2 15l-5-5 1.410-1.410L10 14.170l7.590-7.590L19 8l-9 9z" fill="#7af8c6"/></svg>
<svg style="left:89.5px;top:763.0px" width="17" height="17" viewBox="0 0 24 24"><path d="M3.500 18.490l6-6.010 4 4L22 6.920l-1.410-1.410-7.090 7.970-4-4L2 16.990z" fill="#8fa89c"/></svg>
<div class="t" style="letter-spacing:-0.122px;left:109.5px;top:760.9px;font-size:12px;color:#9fb3a9;">1.2M</div>
<svg style="left:146.5px;top:762.0px" width="17" height="17" viewBox="0 0 24 24"><path d="M22 9.240l-7.190-.620L12 2 9.190 8.630 2 9.240l5.460 4.730L5.820 21 12 17.270 18.180 21l-1.630-7.030L22 9.240zM12 15.400l-3.760 2.270 1-4.280-3.320-2.880 4.380-.380L12 6.100l1.710 4.040 4.380.380-3.320 2.880 1 4.280L12 15.400z" fill="#8fa89c"/></svg>
<div class="t" style="letter-spacing:-0.680px;left:167.1px;top:760.9px;font-size:12px;color:#9fb3a9;">12</div>
<svg style="left:89.0px;top:781.2px" width="18" height="18" viewBox="0 0 24 24"><path d="M15 9H9v6h6V9zm-2 4h-2v-2h2v2zm8-2V9h-2V7c0-1.100-.9-2-2-2h-2V3h-2v2h-2V3H9v2H7c-1.100 0-2 .9-2 2v2H3v2h2v2H3v2h2v2c0 1.100.9 2 2 2h2v2h2v-2h2v2h2v-2h2c1.100 0 2-.9 2-2v-2h2v-2h-2v-2h2zm-4 6H7V7h10v10z" fill="#8fa89c"/></svg>
<svg style="left:118.8px;top:781.2px" width="18" height="18" viewBox="0 0 24 24"><path d="M22 9V7h-2V5c0-1.100-.9-2-2-2H4c-1.100 0-2 .9-2 2v14c0 1.100.9 2 2 2h14c1.100 0 2-.9 2-2v-2h2v-2h-2v-2h2v-2h-2V9h2zm-4 10H4V5h14v14zM6 13h5v4H6zm6-6h4v3h-4zM6 7h5v5H6zm6 4h4v6h-4z" fill="#8fa89c"/><path d="M2.500 2.500 L21.500 21.500" stroke="#8fa89c" stroke-width="2" fill="none"/><path d="M4 1.200 L22.800 20" stroke="#3d564b" stroke-width="1.600" fill="none"/></svg>
<svg style="left:148.8px;top:781.2px" width="18" height="18" viewBox="0 0 24 24"><path d="M9.400 16.600L4.800 12l4.600-4.600L8 6l-6 6 6 6 1.400-1.400zm5.200 0l4.600-4.600-4.600-4.600L16 6l6 6-6 6-1.400-1.400z" fill="#8fa89c"/></svg>
<svg style="left:179.1px;top:781.2px" width="18" height="18" viewBox="0 0 24 24"><path d="M12 2.300 L20.400 7.100 V16.900 L12 21.700 L3.600 16.900 V7.100 Z M3.900 7.300 L12 12 L20.100 7.300 M12 12 V21.400" fill="none" stroke="#8fa89c" stroke-width="2" stroke-linejoin="round"/></svg>
<div class="a" style="left:0;top:808.25px;width:255px;height:1px;background:#314c40"></div>
<!-- Generic Capacitor -->
<div class="t" style="letter-spacing:-0.131px;left:85.4px;top:818.5px;font-size:14px;color:#e6efe9;">Generic Capacitor</div>
<div class="t" style="letter-spacing:0.042px;left:85.4px;top:843.6px;font-size:12px;color:#a3b5ac;">A generic fixed capacitor for</div>
<div class="t" style="letter-spacing:-0.142px;left:85.4px;top:859.6px;font-size:12px;color:#a3b5ac;">rapid developing circuit…</div>
<div class="t" style="letter-spacing:0.057px;left:89.2px;top:881.8px;font-size:12px;color:#7af8c6;">jharwinbarrozo</div>
<svg style="left:172.2px;top:884.7px" width="14.5" height="14.5" viewBox="0 0 24 24"><path d="M12 2C6.480 2 2 6.480 2 12s4.480 10 10 10 10-4.480 10-10S17.520 2 12 2zm-2 15l-5-5 1.410-1.410L10 14.170l7.590-7.590L19 8l-9 9z" fill="#7af8c6"/></svg>
<svg style="left:89.5px;top:903.7px" width="17" height="17" viewBox="0 0 24 24"><path d="M3.500 18.490l6-6.010 4 4L22 6.920l-1.410-1.410-7.090 7.970-4-4L2 16.990z" fill="#8fa89c"/></svg>
<div class="t" style="letter-spacing:-0.147px;left:109.5px;top:901.6px;font-size:12px;color:#9fb3a9;">1.4M</div>
<svg style="left:146.4px;top:902.7px" width="17" height="17" viewBox="0 0 24 24"><path d="M22 9.240l-7.190-.620L12 2 9.190 8.630 2 9.240l5.460 4.730L5.820 21 12 17.270 18.180 21l-1.630-7.030L22 9.240zM12 15.400l-3.760 2.270 1-4.280-3.320-2.880 4.380-.380L12 6.100l1.710 4.040 4.380.380-3.320 2.880 1 4.280L12 15.400z" fill="#8fa89c"/></svg>
<div class="t" style="letter-spacing:-0.630px;left:167.0px;top:901.6px;font-size:12px;color:#9fb3a9;">14</div>
<svg style="left:89.0px;top:922.0px" width="18" height="18" viewBox="0 0 24 24"><path d="M15 9H9v6h6V9zm-2 4h-2v-2h2v2zm8-2V9h-2V7c0-1.100-.9-2-2-2h-2V3h-2v2h-2V3H9v2H7c-1.100 0-2 .9-2 2v2H3v2h2v2H3v2h2v2c0 1.100.9 2 2 2h2v2h2v-2h2v2h2v-2h2c1.100 0 2-.9 2-2v-2h2v-2h-2v-2h2zm-4 6H7V7h10v10z" fill="#8fa89c"/></svg>
<svg style="left:118.8px;top:922.0px" width="18" height="18" viewBox="0 0 24 24"><path d="M22 9V7h-2V5c0-1.100-.9-2-2-2H4c-1.100 0-2 .9-2 2v14c0 1.100.9 2 2 2h14c1.100 0 2-.9 2-2v-2h2v-2h-2v-2h2v-2h-2V9h2zm-4 10H4V5h14v14zM6 13h5v4H6zm6-6h4v3h-4zM6 7h5v5H6zm6 4h4v6h-4z" fill="#8fa89c"/><path d="M2.500 2.500 L21.500 21.500" stroke="#8fa89c" stroke-width="2" fill="none"/><path d="M4 1.200 L22.800 20" stroke="#3d564b" stroke-width="1.600" fill="none"/></svg>
<svg style="left:148.8px;top:922.0px" width="18" height="18" viewBox="0 0 24 24"><path d="M9.400 16.600L4.800 12l4.600-4.600L8 6l-6 6 6 6 1.400-1.400zm5.200 0l4.600-4.600-4.600-4.600L16 6l6 6-6 6-1.400-1.400z" fill="#8fa89c"/></svg>
<svg style="left:179.1px;top:922.0px" width="18" height="18" viewBox="0 0 24 24"><path d="M12 2.300 L20.400 7.100 V16.900 L12 21.700 L3.600 16.900 V7.100 Z M3.900 7.300 L12 12 L20.100 7.300 M12 12 V21.400" fill="none" stroke="#8fa89c" stroke-width="2" stroke-linejoin="round"/></svg>
<div class="a" style="left:0;top:949.00px;width:255px;height:1px;background:#314c40"></div>
<!-- Generic Inductor -->
<div class="t" style="letter-spacing:-0.100px;left:85.4px;top:959.2px;font-size:14px;color:#e6efe9;">Generic Inductor</div>
<svg style="left:0;top:0" width="268" height="983"><path d="M11.0 185.3 H65.0" fill="none" stroke="#c9dcd2" stroke-width="2" /><circle cx="69.6" cy="185.3" r="4.200" fill="none" stroke="#c9dcd2" stroke-width="1.800"/><path d="M43.1 283.8 V319.3" fill="none" stroke="#b4c9bf" stroke-width="2.6" /><path d="M18.0 319.3 H69.0 M28.0 332.7 H58.3 M35.0 346.3 H52.0" fill="none" stroke="#b4c9bf" stroke-width="2.8" /><path d="M11.0 457.2 H75.0" fill="none" stroke="#e4f3eb" stroke-width="2" /><path d="M13.1 569.3 H73.0 M42.9 569.3 V627.9" fill="none" stroke="#e6fff3" stroke-width="3.6" /><path d="M11.4 738.3 L22.0 738.3 L26.2 750.0 L33.3 727.0 L40.3 750.0 L47.4 727.0 L54.4 750.0 L60.8 727.0 L64.8 738.3 L75.0 738.3" fill="none" stroke="#b4c9bf" stroke-width="2" stroke-linejoin="miter"/><path d="M10.9 878.6 H37.9 M37.9 865.7 V891.6 M47.9 865.7 V891.6 M47.9 878.6 H75.1" fill="none" stroke="#b4c9bf" stroke-width="2" /></svg>
</div>
<div id="cv" class="pane">
<!--CANVAS-->
<svg style="left:-339px;top:-173px" width="1904" height="1232" viewBox="0 0 1904 1232"><path d="M538 527 V465.6 H606" stroke="#9bb5a8" stroke-width="2.400" fill="none"/><path d="M680 465.6 H1152.600" stroke="#9bb5a8" stroke-width="2.400" fill="none"/><path d="M1226.500 465.6 H1253.900 V714" stroke="#9bb5a8" stroke-width="2.400" fill="none"/><path d="M800.600 465.6 V517.400 M800.600 591 V686.300" stroke="#9bb5a8" stroke-width="2.400" fill="none"/><path d="M965.700 465.6 V517.400 M965.700 591 V788.600 H1181" stroke="#9bb5a8" stroke-width="2.400" fill="none"/><path d="M1111.500 465.6 V517.400 M1111.500 591 V760.900 H873.200" stroke="#9bb5a8" stroke-width="2.400" fill="none"/><path d="M800.600 653.6 H850.800 M924.900 653.6 H965.700" stroke="#9bb5a8" stroke-width="2.400" fill="none"/><path d="M1111.500 653.6 H1152.200 M1226.400 653.6 H1253.900" stroke="#9bb5a8" stroke-width="2.400" fill="none"/><path d="M800.500 836 V870" stroke="#9bb5a8" stroke-width="2.400" fill="none"/><path d="M1253.800 863.600 V876.500" stroke="#9bb5a8" stroke-width="2.400" fill="none"/><circle cx="800.6" cy="465.6" r="3.400" fill="#9bb5a8"/><circle cx="965.7" cy="465.6" r="3.400" fill="#9bb5a8"/><circle cx="1111.5" cy="465.6" r="3.400" fill="#9bb5a8"/><circle cx="800.6" cy="653.6" r="3.400" fill="#9bb5a8"/><circle cx="965.7" cy="653.6" r="3.400" fill="#9bb5a8"/><circle cx="1111.5" cy="653.6" r="3.400" fill="#9bb5a8"/><circle cx="1253.9" cy="653.6" r="3.400" fill="#9bb5a8"/><path d="M538 527 V550.700" stroke="#cfe5da" stroke-width="2.6" fill="none" /><path d="M521 550.700 H555.700 M528 560.700 H548.800 M532.600 569.600 H543.900" stroke="#cfe5da" stroke-width="2.6" fill="none" /><path d="M605.900 465.6 H637.100 M648.600 465.6 H680" stroke="#cfe5da" stroke-width="2.6" fill="none" /><path d="M637.100 453.100 V478.700" stroke="#cfe5da" stroke-width="2.3" fill="none" /><path d="M648.600 439.100 V492.200" stroke="#cfe5da" stroke-width="3" fill="none" /><path d="M605.900 447.100 H617.900 M668 447.100 H680 M673.900 441.200 V453.100" stroke="#cfe5da" stroke-width="2.5" fill="none" /><path d="M800.6 517.400 V531 L788.5 535.300 L812.7 543 L788.5 550.900 L812.7 558.500 L788.5 566.250 L812.7 573.900 L800.6 577.700 V591" stroke="#cfe5da" stroke-width="2.7" fill="none" stroke-linejoin="round"/><path d="M965.7 517.400 V531 L953.6 535.300 L977.8 543 L953.6 550.900 L977.8 558.500 L953.6 566.250 L977.8 573.900 L965.7 577.700 V591" stroke="#cfe5da" stroke-width="2.7" fill="none" stroke-linejoin="round"/><path d="M1111.5 517.400 V531 L1099.4 535.300 L1123.6 543 L1099.4 550.900 L1123.6 558.500 L1099.4 566.250 L1123.6 573.900 L1111.5 577.700 V591" stroke="#cfe5da" stroke-width="2.7" fill="none" stroke-linejoin="round"/><path d="M1152.600 465.6 H1179.500 M1199.800 465.6 H1226.500" stroke="#cfe5da" stroke-width="2.6" fill="none" /><path d="M1179.700 452.600 V478.600 L1197.600 465.6 Z" stroke="#cfe5da" stroke-width="2.5" fill="none" stroke-linejoin="miter"/><path d="M1199.800 450.200 V480.900" stroke="#cfe5da" stroke-width="2.8" fill="none" /><path d="M1174.3 446.100 L1182.5 437.800" stroke="#cfe5da" stroke-width="2.7" fill="none" /><path d="M1186.6 433.700 L1185.2 443.100 L1177.3 435.200 Z" fill="#cfe5da"/><path d="M1190.4 446.100 L1198.6 437.800" stroke="#cfe5da" stroke-width="2.7" fill="none" /><path d="M1202.7 433.700 L1201.3 443.100 L1193.4 435.200 Z" fill="#cfe5da"/><path d="M850.800 653.6 H881.900 M890.300 653.6 H924.900" stroke="#cfe5da" stroke-width="2.6" fill="none" /><path d="M881.900 638.500 V669" stroke="#cfe5da" stroke-width="2.7" fill="none" /><path d="M894.800 638.750 Q885.800 653.600 894.800 668.600" stroke="#cfe5da" stroke-width="2.6" fill="none" /><path d="M864.500 643.900 H876.300 M870.400 638 V650" stroke="#cfe5da" stroke-width="2.5" fill="none" /><path d="M1152.200 653.6 H1187.400 M1195.100 653.6 H1226.400" stroke="#cfe5da" stroke-width="2.6" fill="none" /><path d="M1195.100 638.500 V669" stroke="#cfe5da" stroke-width="2.7" fill="none" /><path d="M1182.600 638.750 Q1191.900 653.600 1182.600 668.600" stroke="#cfe5da" stroke-width="2.6" fill="none" /><path d="M1200.900 643.900 H1212.700 M1206.800 638 V650" stroke="#cfe5da" stroke-width="2.5" fill="none" /><circle cx="814.400" cy="760.900" r="27.500" stroke="#cfe5da" stroke-width="2.600" fill="none"/><path d="M800.500 686.300 V736.500 L821.500 760.300" stroke="#cfe5da" stroke-width="2.6" fill="none" /><path d="M823.400 746 V776" stroke="#cfe5da" stroke-width="2.9" fill="none" /><path d="M823 760.900 H873.200" stroke="#cfe5da" stroke-width="2.6" fill="none" /><path d="M821.500 761.300 L809 775 M800.500 783.600 V836" stroke="#cfe5da" stroke-width="2.6" fill="none" /><path d="M800.800 784.200 L806 768.200 L816.600 777.200 Z" fill="#cfe5da"/><circle cx="1240" cy="788.600" r="27.600" stroke="#cfe5da" stroke-width="2.600" fill="none"/><path d="M1253.800 714 V764.400 L1232.300 787.900" stroke="#cfe5da" stroke-width="2.6" fill="none" /><path d="M1230.800 773 V803.900" stroke="#cfe5da" stroke-width="2.9" fill="none" /><path d="M1181 788.600 H1231" stroke="#cfe5da" stroke-width="2.6" fill="none" /><path d="M1232.300 789.200 L1245 803 M1253.800 811 V863.600" stroke="#cfe5da" stroke-width="2.6" fill="none" /><path d="M1253.500 811.800 L1249 795.600 L1237.700 804.600 Z" fill="#cfe5da"/><path d="M800.500 870 V894.700" stroke="#cfe5da" stroke-width="2.6" fill="none" /><path d="M783 894.700 H818.200 M790 903.700 H811 M795 913 H806.600" stroke="#cfe5da" stroke-width="2.6" fill="none" /><path d="M1253.800 876.500 V901" stroke="#cfe5da" stroke-width="2.6" fill="none" /><path d="M1236.200 901 H1271 M1243.100 910 H1263.800 M1248 919.600 H1259.400" stroke="#cfe5da" stroke-width="2.6" fill="none" /></svg>
<div class="t" style="letter-spacing:0.036px;left:286.9px;top:247.0px;font-size:10.3px;line-height:14px;height:14px;color:#dcebe3;font-weight:bold;">BATT1</div>
<div class="t" style="letter-spacing:-0.532px;left:846.5px;top:227.5px;font-size:10.3px;line-height:14px;height:14px;color:#dcebe3;font-weight:bold;">LED1</div>
<div class="t" style="letter-spacing:0.153px;left:819.7px;top:242.1px;font-size:10.3px;line-height:14px;height:14px;color:#dcebe3;">CTL1206FYW1T</div>
<div class="t" style="letter-spacing:-0.686px;left:486.7px;top:357.9px;font-size:10.3px;line-height:14px;height:14px;color:#dcebe3;font-weight:bold;">R1</div>
<div class="t" style="letter-spacing:-0.084px;left:486.7px;top:372.7px;font-size:10.3px;line-height:14px;height:14px;color:#dcebe3;">1k Ω</div>
<div class="t" style="letter-spacing:0.237px;left:486.7px;top:387.6px;font-size:10.3px;line-height:14px;height:14px;color:#dcebe3;">RMCF0805FT1K00</div>
<div class="t" style="letter-spacing:-0.186px;left:651.7px;top:360.5px;font-size:10.3px;line-height:14px;height:14px;color:#dcebe3;font-weight:bold;">R2</div>
<div class="t" style="letter-spacing:0.086px;left:651.7px;top:375.3px;font-size:10.3px;line-height:14px;height:14px;color:#dcebe3;">47k Ω</div>
<div class="t" style="letter-spacing:0.304px;left:651.7px;top:390.2px;font-size:10.3px;line-height:14px;height:14px;color:#dcebe3;">RMCF0805JT47K0</div>
<div class="t" style="letter-spacing:-0.186px;left:797.4px;top:360.5px;font-size:10.3px;line-height:14px;height:14px;color:#dcebe3;font-weight:bold;">R3</div>
<div class="t" style="letter-spacing:0.086px;left:797.4px;top:375.3px;font-size:10.3px;line-height:14px;height:14px;color:#dcebe3;">47k Ω</div>
<div class="t" style="letter-spacing:0.326px;left:797.4px;top:390.2px;font-size:10.3px;line-height:14px;height:14px;color:#dcebe3;">RMCF0805JT47K0</div>
<div class="t" style="letter-spacing:-0.386px;left:318.0px;top:440.3px;font-size:10.3px;line-height:14px;height:14px;color:#dcebe3;font-weight:bold;">C1</div>
<div class="t" style="letter-spacing:0.191px;left:318.0px;top:455.1px;font-size:10.3px;line-height:14px;height:14px;color:#dcebe3;">10u F</div>
<div class="t" style="letter-spacing:0.405px;left:318.0px;top:470.0px;font-size:10.3px;line-height:14px;height:14px;color:#dcebe3;">875105359001</div>
<div class="t" style="letter-spacing:-0.136px;left:971.3px;top:460.3px;font-size:10.3px;line-height:14px;height:14px;color:#dcebe3;font-weight:bold;">C2</div>
<div class="t" style="letter-spacing:0.091px;left:971.3px;top:475.1px;font-size:10.3px;line-height:14px;height:14px;color:#dcebe3;">10u F</div>
<div class="t" style="letter-spacing:0.355px;left:971.3px;top:490.0px;font-size:10.3px;line-height:14px;height:14px;color:#dcebe3;">875105359001</div>
<div class="t" style="letter-spacing:-0.325px;left:421.8px;top:585.8px;font-size:10.3px;line-height:14px;height:14px;color:#dcebe3;font-weight:bold;">Q1</div>
<div class="t" style="letter-spacing:0.446px;left:378.1px;top:600.4px;font-size:10.3px;line-height:14px;height:14px;color:#dcebe3;">MMBT3904</div>
<div class="t" style="letter-spacing:-0.825px;left:941.0px;top:614.8px;font-size:10.3px;line-height:14px;height:14px;color:#dcebe3;font-weight:bold;">Q2</div>
<div class="t" style="letter-spacing:0.471px;left:941.0px;top:629.1px;font-size:10.3px;line-height:14px;height:14px;color:#dcebe3;">MMBT3904</div>
<div class="a" style="left:12px;top:932px;width:58px;height:34px;border-radius:17px;background:#3d564b;box-shadow:0 3px 8px rgba(0,0,0,.25)"></div>
<svg style="left:25.500px;top:940.500px" width="17" height="17" viewBox="0 0 24 24"><path d="M20 17.170L18.830 16H4V4h16v13.170zM20 2H4c-1.100 0-2 .9-2 2v12c0 1.100.9 2 2 2h14l4 4V4c0-1.100-.9-2-2-2z" fill="#dcebe3"/></svg>
<div class="t" style="left:46px;top:939px;width:12px;text-align:center;font-size:14px;color:#e6efe9">0</div>
<div class="a" style="left:1124.9px;top:924.8px;width:40px;height:40px;border-radius:50%;background:#3d564b;box-shadow:0 3px 8px rgba(0,0,0,.22)"></div>
<div class="a" style="left:1172.8px;top:924.8px;width:40px;height:40px;border-radius:50%;background:#3d564b;box-shadow:0 3px 8px rgba(0,0,0,.22)"></div>
<svg style="left:1132.9px;top:932.8px" width="24" height="24" viewBox="0 0 24 24"><path d="M8 4v1.450l2 2V4h4v4h-3.450l2 2H14v1.450l2 2V10h4v4h-3.450l2 2H20v1.450l2 2V4c0-1.100-.9-2-2-2H4.550l2 2H8zm8 0h4v4h-4V4zM1.270 1.270L0 2.550l2 2V20c0 1.100.9 2 2 2h15.460l2 2 1.270-1.270L1.270 1.270zM10 12.550L11.450 14H10v-1.450zm-6-6L5.450 8H4V6.550zM8 20H4v-4h4v4zm0-6H4v-4h3.450l.55.550V14zm6 6h-4v-4h3.450l.55.540V20zm2 0v-1.460L17.460 20H16z" fill="#e9f5ef"/></svg>
<svg style="left:1180.8px;top:932.8px" width="24" height="24" viewBox="0 0 24 24"><path d="M7 14H5v5h5v-2H7v-3zm-2-4h2V7h3V5H5v5zm12 7h-3v2h5v-5h-2v3zM14 5v2h3v3h2V5h-5z" fill="#e9f5ef"/></svg>
</div>
<div id="rp" class="pane">
<!--RIGHT-->
<div class="a" style="left:0;top:0;width:254px;height:575px;background:#3d564b;border-radius:0 0 4px 4px"></div>
<div class="t" style="letter-spacing:-0.034px;left:10.4px;top:14.2px;font-size:15px;color:#e6efe9;">[Example] Simulation of</div>
<div class="t" style="letter-spacing:0.067px;left:10.4px;top:36.5px;font-size:15px;color:#e6efe9;">Astable Multivibrator Circuit</div>
<svg style="left:213.8px;top:22.2px" width="24" height="24" viewBox="0 0 24 24"><path d="M12 8l-6 6 1.410 1.410L12 10.830l4.590 4.580L18 14z" fill="#7d978a"/></svg>
<svg style="left:0;top:0" width="254" height="200"><path d="M64.3 151.6 L98.6 151.6 L98.6 119.0 L132.0 119.0 L132.0 151.6 L165.6 151.6 L165.6 119.0 L196.7 119.0" fill="none" stroke="#7af8c6" stroke-width="4" stroke-linejoin="miter"/></svg>
<div class="t" style="letter-spacing:-0.522px;left:53.6px;top:177.6px;font-size:28.5px;color:#e9fff5;line-height:34px;height:34px;-webkit-text-stroke:.800px #e9fff5">SIMULATED</div>
<div class="a" style="left:10.400px;top:253.300px;width:233.400px;height:135px;border:1px solid #607a6e;border-radius:4px"></div>
<div class="a" style="left:20px;top:251px;width:70px;height:5px;background:#3d564b"></div>
<div class="t" style="letter-spacing:-0.030px;left:24.5px;top:243.2px;font-size:12px;color:#a3b5ac;">Description</div>
<div class="t" style="letter-spacing:-0.070px;left:24.4px;top:263.6px;font-size:16px;color:#e6efe9;">A simulated blinking LED</div>
<div class="t" style="letter-spacing:0.056px;left:24.4px;top:282.6px;font-size:16px;color:#e6efe9;">circuit using an astable</div>
<div class="t" style="letter-spacing:0.037px;left:24.4px;top:301.6px;font-size:16px;color:#e6efe9;">multivibrator a.k.a "flip-flop"</div>
<div class="t" style="letter-spacing:-0.148px;left:24.4px;top:320.6px;font-size:16px;color:#e6efe9;">as a square wave generator.</div>
<div class="t" style="letter-spacing:-0.075px;left:24.4px;top:339.6px;font-size:16px;color:#e6efe9;">It also includes PCB layout</div>
<div class="t" style="letter-spacing:0.083px;left:24.4px;top:358.6px;font-size:16px;color:#e6efe9;">of the project.</div>
<div class="t" style="letter-spacing:-0.200px;left:10.4px;top:402.1px;font-size:12px;color:#a3b5ac;">Created</div>
<div class="t" style="letter-spacing:-0.057px;left:10.4px;top:424.4px;font-size:16px;color:#e6efe9;">September 28th 2022</div>
<div class="t" style="left:10.4px;top:451.7px;font-size:12px;color:#a3b5ac"><span style="letter-spacing:-0.087px">Last updated by</span> <span style="letter-spacing:-0.094px;color:#7af8c6">newuser</span></div>
<div class="t" style="letter-spacing:0.029px;left:10.4px;top:474.6px;font-size:16px;color:#e6efe9;">3 months ago</div>
<div class="t" style="letter-spacing:0.014px;left:10.4px;top:501.8px;font-size:12px;color:#a3b5ac;">1 Contributor(s)</div>
<svg style="left:9.6px;top:521.2px" width="40" height="40" viewBox="0 0 40 40"><defs><clipPath id="av2c"><circle cx="20" cy="20" r="20"/></clipPath><radialGradient id="av2g1"><stop offset="0.5" stop-color="#f6f2e6"/><stop offset="1.0" stop-color="#f6f2e6" stop-opacity="0"/></radialGradient><radialGradient id="av2g2"><stop offset="0.45" stop-color="#a9663a"/><stop offset="1.0" stop-color="#a9663a" stop-opacity="0"/></radialGradient><radialGradient id="av2g3"><stop offset="0.3" stop-color="#643820"/><stop offset="1.0" stop-color="#643820" stop-opacity="0"/></radialGradient><radialGradient id="av2g4"><stop offset="0.3" stop-color="#dca873"/><stop offset="1.0" stop-color="#dca873" stop-opacity="0"/></radialGradient><radialGradient id="av2g5"><stop offset="0.62" stop-color="#c59a86"/><stop offset="1.0" stop-color="#c59a86" stop-opacity="0"/></radialGradient><radialGradient id="av2g6"><stop offset="0.2" stop-color="#dfbcab"/><stop offset="1.0" stop-color="#dfbcab" stop-opacity="0"/></radialGradient><radialGradient id="av2g7"><stop offset="0.4" stop-color="#7d4a44"/><stop offset="1.0" stop-color="#7d4a44" stop-opacity="0"/></radialGradient><linearGradient id="av2l" x1="0" y1="0" x2="0" y2="1"><stop offset="0" stop-color="#e4dccb"/><stop offset="1" stop-color="#efeee8"/></linearGradient></defs><g clip-path="url(#av2c)"><rect x="-4" y="-4" width="48" height="48" fill="url(#av2l)"/><ellipse cx="6" cy="15" rx="13" ry="19" fill="url(#av2g1)"/><ellipse cx="32" cy="13" rx="14" ry="17" fill="url(#av2g2)"/><ellipse cx="36.500" cy="21" rx="7" ry="11" fill="url(#av2g3)"/><ellipse cx="27" cy="5.500" rx="11" ry="7" fill="url(#av2g4)"/><ellipse cx="19" cy="15.500" rx="10" ry="12.500" fill="url(#av2g5)"/><ellipse cx="17.500" cy="8" rx="8" ry="5.500" fill="url(#av2g6)"/><ellipse cx="19.500" cy="19.500" rx="4.600" ry="2.200" fill="url(#av2g7)"/><ellipse cx="19.500" cy="19" rx="2.400" ry=".600" fill="#e9d9d2" opacity=".8"/><circle cx="14.500" cy="12" r="1.200" fill="#4a342e" opacity=".8"/><circle cx="22.500" cy="11.500" r="1.300" fill="#f3f3f3" opacity=".85"/><path d="M-2 42 L-2 30.500 L4 27.500 L10 29.500 L15 25.500 L22 28.500 L28 23.500 L42 18.500 L42 42 Z" fill="#e9ebe8" opacity=".55"/><path d="M-2 42 L-2 31.500 L4 28.500 L10 30.500 L15 26.500 L22 29.500 L28 24.500 L42 19.500 L42 42 Z" fill="#f4f6f5"/><path d="M1 29.500 L6 28 L4 31.500 Z" fill="#4a3626" opacity=".8"/><path d="M14.500 26.500 L11 38" stroke="#3d3a2b" stroke-width="1.700" stroke-opacity=".85" fill="none"/><path d="M21.500 30 L17.500 41" stroke="#2f3b2c" stroke-width="1.400" stroke-opacity=".85" fill="none"/><path d="M2 21 L4 27" stroke="#55504a" stroke-width=".800" stroke-opacity=".7" fill="none"/><rect width="40" height="40" fill="#4fae8c" opacity=".16"/></g></svg>
<div class="a" style="left:0;top:590px;width:254px;height:240.500px;background:#3d564b;border-radius:0 0 4px 4px"></div>
<div class="t" style="letter-spacing:-0.032px;left:10.4px;top:605.1px;font-size:15px;color:#e6efe9;">Controls</div>
<svg style="left:213.8px;top:603.0px" width="24" height="24" viewBox="0 0 24 24"><path d="M16.590 8.590L12 13.170 7.410 8.590 6 10l6 6 6-6z" fill="#7d978a"/></svg>
<div class="a" style="left:0;top:637.3px;width:254px;height:1.500px;background:#37514a"></div>
<div class="t" style="letter-spacing:-0.017px;left:10.4px;top:653.1px;font-size:15px;color:#e6efe9;">Properties</div>
<svg style="left:213.8px;top:651.0px" width="24" height="24" viewBox="0 0 24 24"><path d="M16.590 8.590L12 13.170 7.410 8.590 6 10l6 6 6-6z" fill="#7d978a"/></svg>
<div class="a" style="left:0;top:685.3px;width:254px;height:1.500px;background:#37514a"></div>
<div class="t" style="letter-spacing:-0.031px;left:10.4px;top:701.1px;font-size:15px;color:#e6efe9;">Availability &amp; Pricing</div>
<svg style="left:213.8px;top:699.0px" width="24" height="24" viewBox="0 0 24 24"><path d="M16.590 8.590L12 13.170 7.410 8.590 6 10l6 6 6-6z" fill="#7d978a"/></svg>
<div class="a" style="left:0;top:733.3px;width:254px;height:1.500px;background:#37514a"></div>
<div class="t" style="letter-spacing:-0.003px;left:10.4px;top:749.1px;font-size:15px;color:#e6efe9;">Assets</div>
<svg style="left:213.8px;top:747.0px" width="24" height="24" viewBox="0 0 24 24"><path d="M16.590 8.590L12 13.170 7.410 8.590 6 10l6 6 6-6z" fill="#7d978a"/></svg>
<div class="a" style="left:0;top:781.3px;width:254px;height:1.500px;background:#37514a"></div>
<div class="t" style="letter-spacing:0.035px;left:10.4px;top:797.1px;font-size:15px;color:#e6efe9;">Simulation</div>
<svg style="left:213.8px;top:795.0px" width="24" height="24" viewBox="0 0 24 24"><path d="M16.590 8.590L12 13.170 7.410 8.590 6 10l6 6 6-6z" fill="#7d978a"/></svg>
</div>
</div>
</body>
</html>
